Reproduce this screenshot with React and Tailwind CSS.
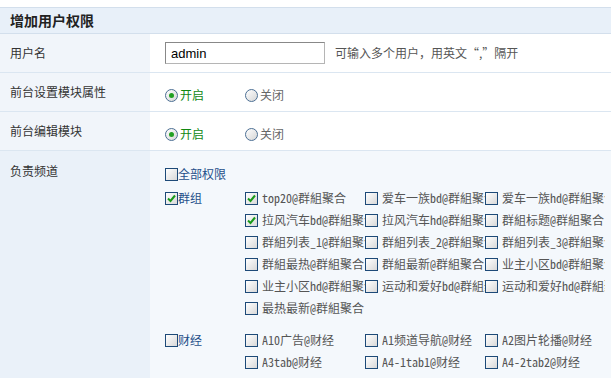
import React from "react";

const cjk = { fontFamily: '"Noto Sans CJK SC", "Noto Sans", sans-serif' };
const mono = { fontFamily: '"Noto Sans Mono CJK SC", "Noto Sans CJK SC", monospace' };

const Check = ({ checked }) => (
    <span className="relative inline-block w-[13px] h-[13px] shrink-0 border border-[#1d4a78] bg-gradient-to-br from-white to-[#d8d8d8]">
        {checked && (
            <svg className="absolute left-[1px] top-[1px]" width="9" height="9" viewBox="0 0 9 9">
                <path d="M1 4.5 L3.5 7 L8 1.5" fill="none" stroke="#1a9a1a" strokeWidth="2" />
            </svg>
        )}
    </span>
);

const Radio = ({ checked }) => (
    <span className="relative inline-flex items-center justify-center w-[13px] h-[13px] rounded-full border border-[#4c6f94] bg-gradient-to-br from-white to-[#d6d6d6]">
        {checked && <span className="w-[5px] h-[5px] rounded-full bg-[#22a022]"></span>}
    </span>
);

const groups = [
    {
        name: "群组",
        checked: true,
        items: [
            ["top20@群組聚合", true], ["爱车一族bd@群組聚合", false], ["爱车一族hd@群組聚合", false],
            ["拉风汽车bd@群組聚合", true], ["拉风汽车hd@群組聚合", false], ["群組标题@群組聚合", false],
            ["群組列表_1@群組聚合", false], ["群組列表_2@群組聚合", false], ["群組列表_3@群組聚合", false],
            ["群組最热@群組聚合", false], ["群組最新@群組聚合", false], ["业主小区bd@群組聚合", false],
            ["业主小区hd@群組聚合", false], ["运动和爱好bd@群組聚合", false], ["运动和爱好hd@群組聚合", false],
            ["最热最新@群組聚合", false],
        ],
    },
    {
        name: "财经",
        checked: false,
        items: [
            ["A10广告@财经", false], ["A1频道导航@财经", false], ["A2图片轮播@财经", false],
            ["A3tab@财经", false], ["A4-1tab1@财经", false], ["A4-2tab2@财经", false],
            ["A4-3tab3@财经", false], ["A5-1tab1@财经", false], ["A6频道头条@财经", false],
        ],
    },
];

const Row = ({ label, children, top, tall, leftBg = "bg-[#f1f5fa]", rightBg = "bg-white" }) => (
    <div className={`flex border-b border-[#dbe6f1] ${tall ? "" : "h-[39px]"}`}>
        <div className={`w-[150px] shrink-0 px-[10px] flex ${top ? "items-start pt-[11px]" : "items-center"} ${leftBg} text-[12px] text-[#333]`}>
            {label}
        </div>
        <div className={`flex-1 pl-[15px] ${rightBg} ${top ? "" : "flex items-center"}`}>{children}</div>
    </div>
);

const RadioPair = () => (
    <div className="flex items-center pt-[6px] text-[12px]">
        <label className="flex items-center w-[80px]">
            <Radio checked />
            <span className="ml-[2px] text-[#118811]">开启</span>
        </label>
        <label className="flex items-center">
            <Radio />
            <span className="ml-[2px] text-[#666]">关闭</span>
        </label>
    </div>
);

export default function App() {
    return (
        <div className="w-[611px] h-[378px] overflow-hidden bg-white pt-[7px]" style={cjk}>
            <div className="h-[27px] border-t border-b border-[#d3dfec] bg-[#e8f0f9] flex items-center px-[10px]">
                <h2 className="text-[14px] font-bold text-[#222]">增加用户权限</h2>
            </div>

            <Row label="用户名">
                <input
                    defaultValue="admin"
                    className="w-[160px] h-[22px] border border-[#b5b5b5] border-t-[#888] border-l-[#888] px-[5px] text-[13px] text-black outline-none"
                    style={{ fontFamily: '"Liberation Sans", Arial, sans-serif' }}
                />
                <span className="ml-[10px] text-[12px] text-[#555]">可输入多个用户，用英文“,”隔开</span>
            </Row>

            <Row label="前台设置模块属性">
                <RadioPair />
            </Row>

            <Row label="前台编辑模块">
                <RadioPair />
            </Row>

            <Row label="负责频道" top tall leftBg="bg-[#eaf1f9]" rightBg="bg-[#f4f8fc]">
                <div className="pt-[12px] pb-[20px] text-[12px]">
                    <div className="flex items-center h-[22px]">
                        <Check />
                        <span className="text-[#1f4f8a]">全部权限</span>
                    </div>
                    {groups.map((g, gi) => (
                        <div key={g.name} className={`flex ${gi === 0 ? "mt-[2px]" : "mt-[10px]"}`}>
                            <div className="w-[80px] shrink-0 flex items-center h-[22px] self-start">
                                <Check checked={g.checked} />
                                <span className="text-[#1f4f8a]">{g.name}</span>
                            </div>
                            <div className="grid grid-cols-[120px_120px_120px]">
                                {g.items.map(([t, c]) => (
                                    <div key={t} className="flex items-center h-[22px] w-[120px]">
                                        <Check checked={c} />
                                        <span className="ml-[4px] w-[103px] overflow-hidden whitespace-nowrap text-[#555]" style={mono}>
                                            {t}
                                        </span>
                                    </div>
                                ))}
                            </div>
                        </div>
                    ))}
                </div>
            </Row>
        </div>
    );
}
